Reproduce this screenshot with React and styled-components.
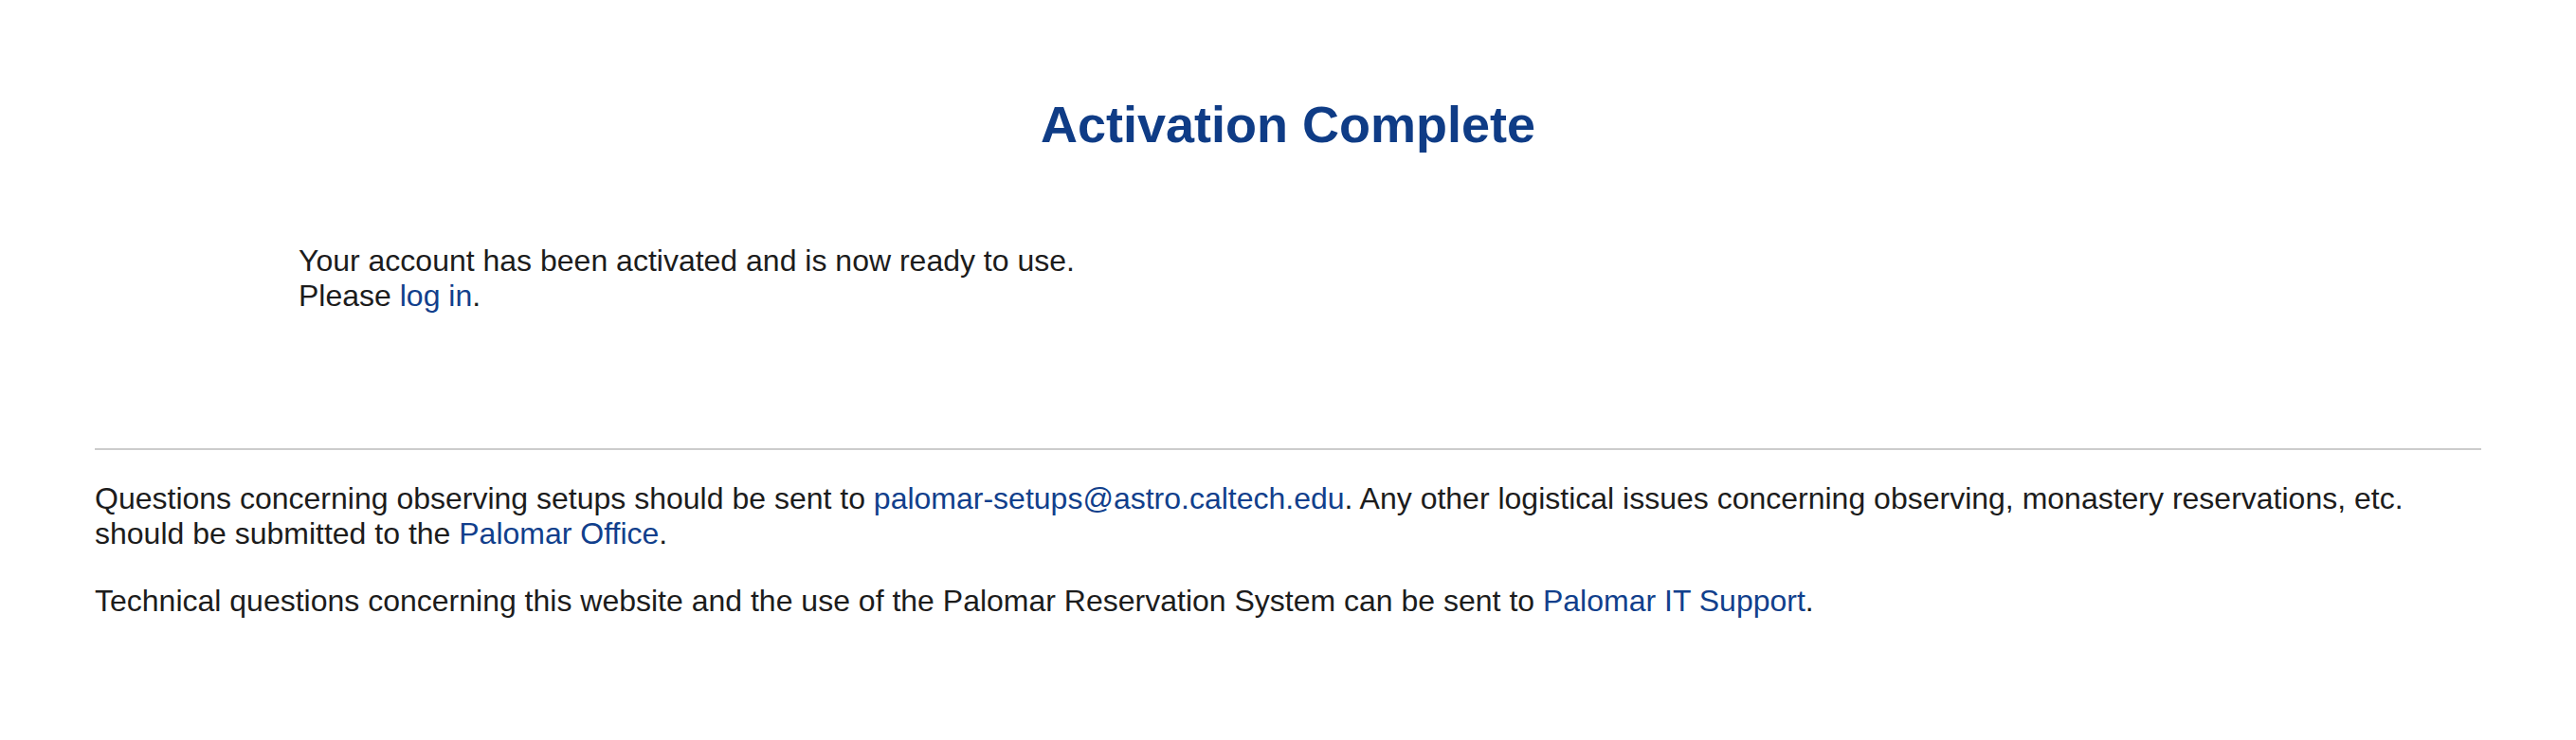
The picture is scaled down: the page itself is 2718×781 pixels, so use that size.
import React from 'react'
import styled, { createGlobalStyle } from 'styled-components'

const GlobalStyle = createGlobalStyle`
  body {
    margin: 0;
    background: #ffffff;
    font-family: "Liberation Sans", Arial, sans-serif;
    color: #1c1c1c;
  }
`

const Page = styled.div`
  padding: 100px 100px 60px;
`

const Title = styled.h1`
  margin: 0;
  text-align: center;
  font-size: 54px;
  font-weight: bold;
  line-height: 62px;
  color: #0f3c86;
`

const Message = styled.div`
  margin-top: 95px;
  padding-left: 215px;
  font-size: 32px;
  line-height: 37px;
`

const Line = styled.div``

const Link = styled.a`
  color: #113f8c;
  text-decoration: none;
`

const Divider = styled.hr`
  margin: 142px 0 0;
  border: 0;
  height: 2px;
  background: #cccccc;
`

const Footer = styled.div`
  padding-top: 33px;
  display: flex;
  flex-direction: column;
  gap: 34px;
`

const Para = styled.p`
  margin: 0;
  font-size: 32px;
  line-height: 37px;
`

export default function App() {
  return (
    <Page>
      <GlobalStyle />
      <Title>Activation Complete</Title>
      <Message>
        <Line>Your account has been activated and is now ready to use.</Line>
        <Line>
          Please <Link href="#">log in</Link>.
        </Line>
      </Message>
      <Divider />
      <Footer>
        <Para>
          Questions concerning observing setups should be sent to{' '}
          <Link href="#">palomar-setups@astro.caltech.edu</Link>. Any other logistical issues
          concerning observing, monastery reservations, etc. should be submitted to the{' '}
          <Link href="#">Palomar Office</Link>.
        </Para>
        <Para>
          Technical questions concerning this website and the use of the Palomar Reservation
          System can be sent to <Link href="#">Palomar IT Support</Link>.
        </Para>
      </Footer>
    </Page>
  )
}
